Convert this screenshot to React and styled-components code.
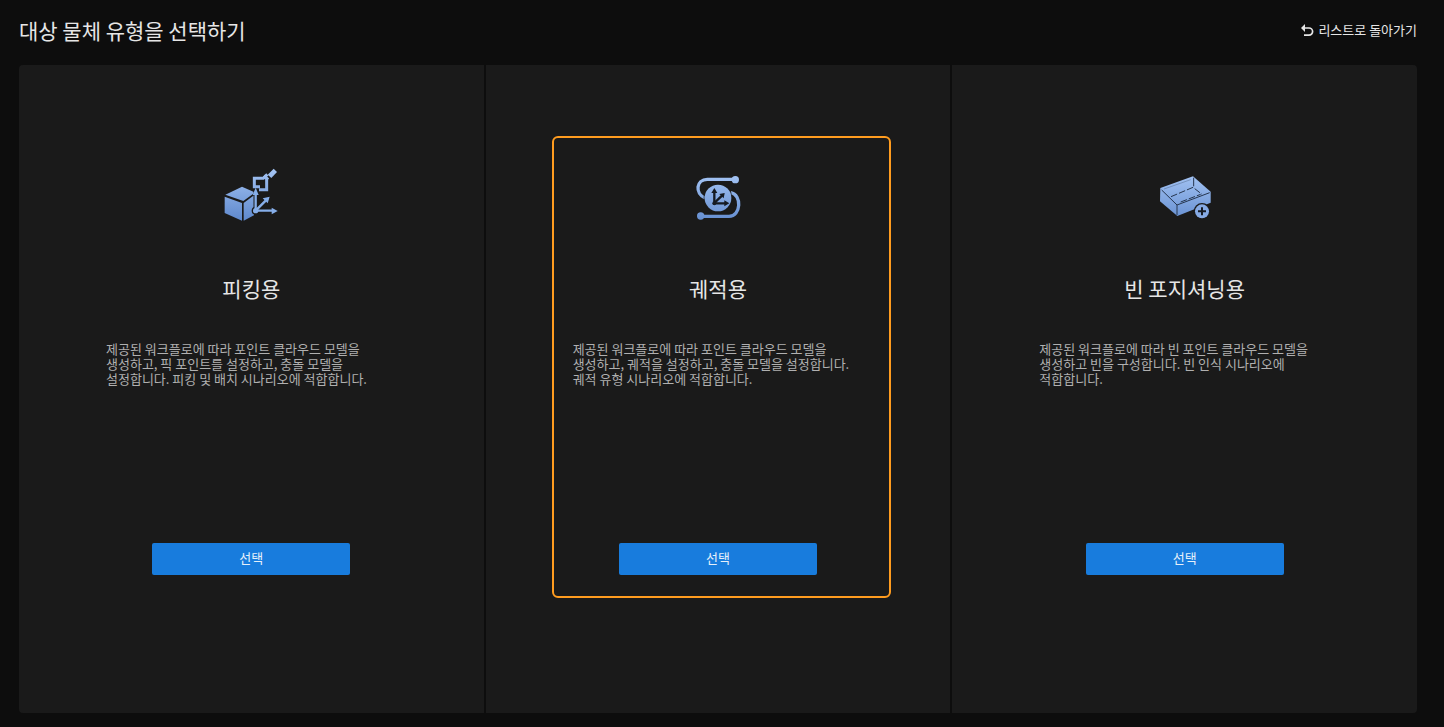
import React from 'react';
import styled, { createGlobalStyle } from 'styled-components';


const GlobalStyle = createGlobalStyle`
    * {
        box-sizing : border-box;
    }

    body {
        margin : 0;
        background : #0d0d0d;
        color : #e6e6e6;
        font-family : "Noto Sans CJK KR", "Noto Sans", sans-serif;
    }
`;

const Page = styled.main`
    display : flex;
    flex-direction : column;
    min-height : 100vh;
    padding : 0px 27px 14px 19px;
`;

const Header = styled.header`
    display : flex;
    align-items : center;
    justify-content : space-between;
    height : 65px;
    padding-bottom : 5px;
`;

const Heading = styled.h1`
    margin : 0;
    font-size : 21px;
    font-weight : 400;
    line-height : 30px;
`;

const BackLink = styled.a`
    display : flex;
    align-items : center;
    gap : 4px;
    color : #e6e6e6;
    font-size : 13px;
    line-height : 20px;
    text-decoration : none;
`;

const Cards = styled.div`
    display : grid;
    grid-template-columns : repeat(3, 1fr);
    gap : 2px;
    flex : 1;
    border-radius : 4px;
    overflow : hidden;
`;

const Card = styled.section`
    position : relative;
    display : flex;
    flex-direction : column;
    align-items : center;
    padding : 95px 87px;
    background : #1a1a1a;
`;

const Highlight = styled.div`
    position : absolute;
    top : 71px;
    right : 59px;
    bottom : 115px;
    left : 66px;
    border : 2px solid #ff9c1f;
    border-radius : 6px;
    pointer-events : none;
`;

const Icon = styled.svg`
    width : 70px;
    height : 70px;
`;

const CardTitle = styled.h2`
    margin : 43px 0px 38px;
    font-size : 21px;
    font-weight : 400;
    line-height : 30px;
`;

const Text = styled.p`
    width : 100%;
    min-height : 202px;
    margin : 0;
    color : #b0b0b0;
    font-size : 13px;
    line-height : 15px;
    word-break : keep-all;
`;

const SelectButton = styled.button`
    width : 198px;
    height : 32px;
    padding : 0px 0px 3px;
    border : none;
    border-radius : 2px;
    background : #187cdd;
    color : #e6f0fa;
    font-family : inherit;
    font-size : 13px;
    cursor : pointer;
`;

const Gradient = ({id}) => (
    <linearGradient id={id} x1="0" y1="30" x2="0" y2="180" gradientUnits="userSpaceOnUse">
        <stop offset="0" stopColor="#a3c3f3" />
        <stop offset="1" stopColor="#5f89cd" />
    </linearGradient>
);

const PickingIcon = () => (
    <Icon viewBox="4 0 210 210" aria-hidden="true">
        <defs><Gradient id="picking" /></defs>
        <g fill="url(#picking)">
            <path d="M32 104 L82 80 L118 96 L118 100 L86 123 Z" />
            <path d="M30 110 L82 129 L82 182 L30 159 Z" />
            <path d="M87 129 L118 106 L118 166 L87 182 Z" />
            <path d="M159 44 L177 26 L187 36 L170 54 Z" />
        </g>
        <g fill="none" stroke="url(#picking)" strokeWidth="9">
            <path d="M136 80 H119 V55 H146 L158 43" />
            <path d="M148 47 L160 59" />
            <path d="M156 53 V89 H133" />
        </g>
        <path d="M123 149 V94 M123 152 H176 M123 151 L154 121" fill="none" stroke="#1a1a1a" strokeWidth="13" />
        <circle cx="123" cy="152" r="12" fill="#1a1a1a" />
        <g fill="none" stroke="#86aee9" strokeWidth="7">
            <path d="M123 152 V100" />
            <path d="M123 152 H174" />
            <path d="M123 152 L153 122" />
        </g>
        <g fill="#86aee9">
            <path d="M123 83 L132 105 H114 Z" />
            <path d="M189 153 L171 143 V163 Z" />
            <path d="M165 110 L159 130 L144 115 Z" />
            <circle cx="123" cy="152" r="8" />
        </g>
    </Icon>
);

const TrajectoryIcon = () => (
    <Icon viewBox="-6 -15 210 210" aria-hidden="true">
        <defs><Gradient id="trajectory" /></defs>
        <g fill="none" stroke="url(#trajectory)" strokeWidth="10">
            <path d="M151 44 L151 43 H67 C33 43 29 86 60 99" />
            <path d="M137 83 C172 89 168 154 132 154 H47 L47 153" />
        </g>
        <circle cx="99" cy="99" r="44" fill="#1a1a1a" fillOpacity="0.5" />
        <g fill="url(#trajectory)">
            <circle cx="151" cy="44" r="11" />
            <circle cx="47" cy="153" r="11" />
            <circle cx="99" cy="99" r="40" />
        </g>
        <g fill="none" stroke="#151a22" strokeWidth="7">
            <path d="M88 80 V115 H121" />
            <path d="M89 113 L111 92" />
        </g>
        <g fill="#151a22">
            <path d="M88 69 L97 84 H79 Z" />
            <path d="M133 115 L118 106 V124 Z" />
            <path d="M119 84 L116 100 L103 87 Z" />
            <circle cx="88" cy="115" r="6" />
        </g>
    </Icon>
);

const BinIcon = () => (
    <Icon viewBox="-1 -15 210 210" aria-hidden="true">
        <defs><Gradient id="bin" /></defs>
        <path d="M30 69 L128 34 L181 80 V113 L81 153 L29 109 Z" fill="url(#bin)" />
        <g fill="none" stroke="#26364f" strokeWidth="3">
            <path d="M34 75 L80 120 L178 83" />
            <path d="M80 120 V150" />
            <path d="M130 38 V64" />
            <path d="M41 72 L121 44" strokeOpacity="0.3" />
            <path d="M62 95 L128 67 L155 88" strokeDasharray="20 6" />
            <path d="M91 111 L151 88" strokeDasharray="20 6" />
        </g>
        <circle cx="155" cy="139" r="25" fill="#1a1a1a" />
        <circle cx="155" cy="139" r="21" fill="#86aae4" />
        <path d="M155 127 V151 M143 139 H167" fill="none" stroke="#151a22" strokeWidth="6" />
    </Icon>
);

const BackIcon = () => (
    <svg width="14" height="14" viewBox="0 0 14 14" fill="none" stroke="#e6e6e6" aria-hidden="true">
        <path d="M3 5 H9 A3.6 3.6 0 0 1 9 12.2 H4" strokeWidth="1.7" />
        <path d="M5 1 L1 5 L5 9 Z" fill="#e6e6e6" stroke="none" />
    </svg>
);

const types = [
    {
        title: '피킹용',
        icon: PickingIcon,
        text: '제공된 워크플로에 따라 포인트 클라우드 모델을 생성하고, 픽 포인트를 설정하고, 충돌 모델을 설정합니다. 피킹 및 배치 시나리오에 적합합니다.',
    },
    {
        title: '궤적용',
        icon: TrajectoryIcon,
        text: '제공된 워크플로에 따라 포인트 클라우드 모델을 생성하고, 궤적을 설정하고, 충돌 모델을 설정합니다. 궤적 유형 시나리오에 적합합니다.',
        highlighted: true,
    },
    {
        title: '빈 포지셔닝용',
        icon: BinIcon,
        text: '제공된 워크플로에 따라 빈 포인트 클라우드 모델을 생성하고 빈을 구성합니다. 빈 인식 시나리오에 적합합니다.',
    },
];

const TypeCard = ({data}) => {
  const TypeIcon = data.icon;
  return (
    <Card>
        <TypeIcon />
        <CardTitle>{data.title}</CardTitle>
        <Text>{data.text}</Text>
        <SelectButton type="button">선택</SelectButton>
        {data.highlighted && <Highlight />}
    </Card>
  )
}

const App = () => {
  return (
    <>
        <GlobalStyle />
        <Page>
            <Header>
                <Heading>대상 물체 유형을 선택하기</Heading>
                <BackLink href="#list">
                    <BackIcon />
                    리스트로 돌아가기
                </BackLink>
            </Header>
            <Cards>
                {types.map((type) => <TypeCard key={type.title} data={type} />)}
            </Cards>
        </Page>
    </>
  )
}

export default App
